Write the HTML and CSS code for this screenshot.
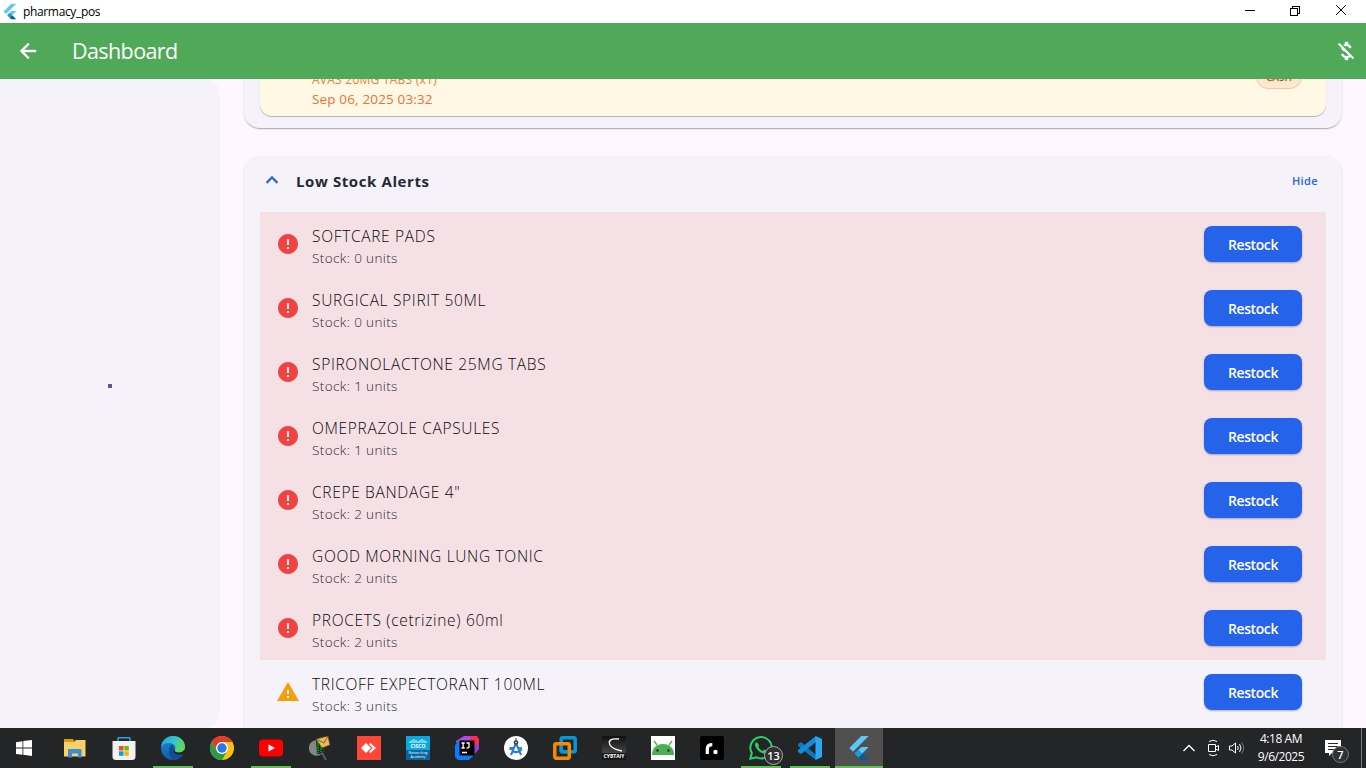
FILE: index.html
```html
<!DOCTYPE html>
<html lang="en">
<head>
<meta charset="utf-8">
<title>pharmacy_pos</title>
<link rel="stylesheet" href="styles.css">
</head>
<body>
<svg class="defs" aria-hidden="true">
  <symbol id="flutter" viewBox="0 0 24 24">
    <path fill="#5cc8f8" d="M14.3 0 2.3 12 6 15.7 21.7 0z"/>
    <path fill="#5cc8f8" d="M14.3 11.07 7.86 17.53 11.5 21.2 21.7 11.07z"/>
    <path fill="#075b9d" d="M11.5 21.2 14.3 24h7.4l-6.5-6.47z"/>
    <path fill="#1a9ce0" d="m7.86 17.53 3.7-3.7 3.7 3.7-3.7 3.7z"/>
  </symbol>
  <symbol id="error" viewBox="0 0 24 24"><path fill="#ef4444" d="M12 2C6.48 2 2 6.48 2 12s4.48 10 10 10 10-4.48 10-10S17.52 2 12 2z"/><path fill="#fbe4ea" d="M11 7h2v6h-2zM11 15h2v2h-2z"/></symbol>
  <symbol id="warning" viewBox="0 0 24 24"><path fill="#f59e0b" d="M1 21h22L12 2z"/><path fill="#f6f1fa" d="M11 10h2v4h-2zM11 16h2v2h-2z"/></symbol>
</svg>

<header class="titlebar">
  <svg class="title-logo" viewBox="0 0 24 24"><use href="#flutter"/></svg>
  <span class="title-text">pharmacy_pos</span>
  <svg class="window-buttons" viewBox="0 0 136 23" fill="none" stroke="#000" shape-rendering="crispEdges">
    <path d="M15 10.5h10M60.500 8.500h7v7h-7zM62.500 8v-2h7v7h-2"/>
    <path shape-rendering="auto" d="m106.200 5.200 9.600 9.600m0-9.600-9.600 9.600"/>
  </svg>
</header>

<div class="appbar">
  <svg class="back" viewBox="0 0 24 24"><path fill="#fff" stroke="#fff" stroke-width=".4" d="M20 11H7.830l5.590-5.590L12 4l-8 8 8 8 1.410-1.410L7.830 13H20z"/></svg>
  <h1>Dashboard</h1>
  <svg class="money" viewBox="0 0 24 24"><path fill="#fff" stroke="#fff" stroke-width=".4" d="M12.500 6.900c1.780 0 2.440.850 2.500 2.100h2.210c-.070-1.720-1.120-3.300-3.210-3.810V3h-3v2.160c-.530.120-1.030.300-1.480.540l1.470 1.470c.410-.170.910-.270 1.510-.270zM5.330 4.060 4.060 5.330 7.500 8.770c0 2.080 1.560 3.210 3.910 3.910l3.510 3.510c-.340.480-1.050.910-2.420.910-2.060 0-2.870-.920-2.980-2.100h-2.200c.120 2.190 1.760 3.420 3.680 3.830V21h3v-2.150c.960-.180 1.820-.550 2.450-1.120l2.220 2.220 1.270-1.270z"/></svg>
</div>

<div class="workspace">
  <aside class="sidebar"><span class="loader"></span></aside>
  <main class="content">
    <section class="card sales">
      <div class="sale">
        <div class="sale-text"><p class="sale-items">AVAS 20MG TABS (x1)</p><p class="sale-date">Sep 06, 2025 03:32</p></div>
        <span class="chip">CASH</span>
      </div>
    </section>
    <section class="card alerts">
      <div class="alerts-head">
        <svg class="chevron" viewBox="0 0 24 24"><path fill="#2563eb" stroke="#2563eb" stroke-width=".4" d="m12 8-6 6 1.410 1.410L12 10.830l4.590 4.580L18 14z"/></svg>
        <h2>Low Stock Alerts</h2>
        <span class="hide">Hide</span>
      </div>
      <div class="row critical"><svg class="status"><use href="#error"/></svg><div class="item"><p class="name">SOFTCARE PADS</p><p class="stock">Stock: 0 units</p></div><button>Restock</button></div>
      <div class="row critical"><svg class="status"><use href="#error"/></svg><div class="item"><p class="name">SURGICAL SPIRIT 50ML</p><p class="stock">Stock: 0 units</p></div><button>Restock</button></div>
      <div class="row critical"><svg class="status"><use href="#error"/></svg><div class="item"><p class="name">SPIRONOLACTONE 25MG TABS</p><p class="stock">Stock: 1 units</p></div><button>Restock</button></div>
      <div class="row critical"><svg class="status"><use href="#error"/></svg><div class="item"><p class="name">OMEPRAZOLE CAPSULES</p><p class="stock">Stock: 1 units</p></div><button>Restock</button></div>
      <div class="row critical"><svg class="status"><use href="#error"/></svg><div class="item"><p class="name">CREPE BANDAGE 4"</p><p class="stock">Stock: 2 units</p></div><button>Restock</button></div>
      <div class="row critical"><svg class="status"><use href="#error"/></svg><div class="item"><p class="name">GOOD MORNING LUNG TONIC</p><p class="stock">Stock: 2 units</p></div><button>Restock</button></div>
      <div class="row critical"><svg class="status"><use href="#error"/></svg><div class="item"><p class="name">PROCETS (cetrizine) 60ml</p><p class="stock">Stock: 2 units</p></div><button>Restock</button></div>
      <div class="row"><svg class="status"><use href="#warning"/></svg><div class="item"><p class="name">TRICOFF EXPECTORANT 100ML</p><p class="stock">Stock: 3 units</p></div><button>Restock</button></div>
    </section>
  </main>
</div>

<footer class="taskbar">
  <div class="task start"><svg viewBox="0 0 24 24"><path fill="#fff" d="m4 6.200 6.500-1v6.300H4zm7.300-1.100L20 4v7.500h-8.700zM4 12.400h6.500v6.400L4 17.900zm7.300 0H20V20l-8.700-1.200z"/></svg></div>
  <div class="task"><svg viewBox="0 0 24 24"><path fill="#d99a0b" d="M1 3h9l1.500 2L10 7H1z"/><path fill="#fbd167" d="M1 6h10l2-2h9.500v16.500H1z"/><path fill="#3a8ed8" d="M5 21.500V14q0-1 1-1h11.500q1 0 1 1v7.500H15v-4H9v4z"/></svg></div>
  <div class="task"><svg viewBox="0 0 24 24"><path fill="none" stroke="#20a8e8" stroke-width="1.500" d="M6 6V2.300q0-.500.500-.500h11q.500 0 .500.500V6"/><path fill="#f2f2f3" d="M.500 5h23v15.500q0 3.500-3.500 3.500H4q-3.500 0-3.500-3.500z"/><path fill="#f04e1f" d="M7 10h4.500v4.500H7z"/><path fill="#7cb800" d="M12.300 10h4.500v4.500h-4.500z"/><path fill="#00a1ec" d="M7 15.300h4.500v4.500H7z"/><path fill="#fbb500" d="M12.300 15.300h4.500v4.500h-4.500z"/></svg></div>
  <div class="task open"><svg viewBox="0 0 24 24">
    <defs><linearGradient id="edge-top" x1="0" y1="0" x2="1" y2=".4"><stop offset="0" stop-color="#239fe0"/><stop offset=".6" stop-color="#32c8cc"/><stop offset="1" stop-color="#61d852"/></linearGradient><linearGradient id="edge-low" x1="0" y1="0" x2="0" y2="1"><stop stop-color="#1b88dd"/><stop offset="1" stop-color="#1061ab"/></linearGradient></defs>
    <circle cx="12" cy="12" r="12" fill="url(#edge-low)"/><path fill="#124e91" d="M8 14c0-3 1.500-5 4-6l1 5c-1 2 1 5 5 5.500 2 .2 4-1 4.800-1C20 23 15 24.500 12 23.800 9 22 8 18 8 14z"/><path fill="url(#edge-top)" d="M0 11C1 4 6 0 12 0c7 0 12 5 12 10.500 0 4-3 6-6 6-3 0-4.500-1-4.500-2 0-.7 1-1 1-2.500C14.500 9 11 7 7.500 7 4 7 1 9 0 11z"/><path fill="#242526" d="M14.200 13.300c-1.500 1.500.2 3.300 3.800 3.300 2.600 0 4.500-1.300 5.700-3.300l.3 3-1.500 2C16 20 11.500 17 12.500 14z"/></svg></div>
  <div class="task"><svg viewBox="0 0 24 24"><circle cx="12" cy="12" r="12" fill="#fbc116"/><path fill="#e33b2e" d="M1.600 6A12 12 0 0 1 22.400 6H12L6.800 15z"/><path fill="#269b48" d="M1.600 6 6.800 15 12 18l5.200-3L12 24A12 12 0 0 1 1.600 6z"/><circle cx="12" cy="12" r="6" fill="#fff"/><circle cx="12" cy="12" r="4.700" fill="#2878e8"/></svg></div>
  <div class="task open"><svg viewBox="0 0 24 24"><rect y="3.500" width="24" height="17" rx="4" fill="#f00"/><path fill="#fff" d="m9.500 8.500 6.500 3.500-6.500 3.500z"/></svg></div>
  <div class="task"><svg viewBox="0 0 24 24"><path stroke="#555b61" stroke-width="2" d="m14 17 4 7"/><circle cx="8.500" cy="12" r="7.700" fill="#858786"/><path fill="#0a3c12" d="M8 5c5 0 8 3 8 7s-2 6-7 6z"/><path fill="#e9b957" stroke="#564019" stroke-width=".7" d="m8 3 12-3 2 9-8 3z"/><path fill="none" stroke="#68481d" stroke-width=".8" d="m8 3 8 4 4-7"/><path stroke="#1fcf42" stroke-dasharray="1.500 1" d="M10 6v11m3-7v6"/></svg></div>
  <div class="task"><svg viewBox="0 0 24 24"><path fill="#ff4438" d="M0 0h24v24H0z"/><path fill="#fff" d="m4 12 5-5 5 5-5 5zM12 8.300 13.500 7l5.500 5-5.500 5-1.500-1.300 3.700-3.700z"/></svg></div>
  <div class="task"><svg viewBox="0 0 24 24"><path fill="#08a9dc" d="M0 0h24v14H0z"/><path fill="#0565a2" d="M0 14h24v10H0z"/><path stroke="#fff" stroke-width=".9" d="M4 5v2m2-3v3m2-4v4m2-3v3m2-2v2m2-3v3m2-4v4m2-3v3m2-2v2"/><text x="12" y="12" class="cisco">CISCO</text><text x="12" y="18" class="academy">Networking</text><text x="12" y="22" class="academy">Academy</text></svg></div>
  <div class="task"><svg viewBox="0 0 24 24"><path fill="#a94be8" d="m1 5 8-5h9L6 21z"/><path fill="#fe2857" d="M15 0h7l2 3v8l-8 9z"/><path fill="#087cfa" d="m0 9 5-5v15h14l-5 5H3l-3-3z"/><path fill="#8d43db" d="m19 10 5-2v5l-6 7z"/><path fill="#000" d="M4.500 4.500h15v15h-15z"/><path fill="none" stroke="#fff" stroke-width="1.300" d="M6.500 7h3.300M8.100 7v5M6.500 12h3.300M11.500 7H14v4q0 1-2.500 1M7 16.500h5"/></svg></div>
  <div class="task"><svg viewBox="0 0 24 24"><circle cx="12" cy="12" r="12" fill="#fff"/><path fill="none" stroke="#2879ee" stroke-width="2" d="M7 19 12 7l5 12M8 15q6 3 10-2"/><path fill="#2879ee" d="M5.500 11h4l-1 3h-3z"/><circle cx="12" cy="6.500" r="2.300" fill="#333b47"/><circle cx="12" cy="6.500" r=".8" fill="#fff"/><path stroke="#333b47" d="M12 2v3"/><path fill="#20b364" d="M15 11h3v3h-3z"/></svg></div>
  <div class="task"><svg viewBox="0 0 24 24" fill="none" stroke-width="3.500"><rect x="8.200" y="1.800" width="14" height="14" rx="1.500" stroke="#0797d5"/><rect x="1.800" y="7.800" width="14.500" height="14.500" rx="1.500" stroke="#f38b00"/><path stroke="#0797d5" d="M8.200 10v4.500q0 1.300 1.300 1.300h4.500"/></svg></div>
  <div class="task"><svg viewBox="0 0 24 24"><defs><linearGradient id="cyb" x2="0" y2="1"><stop stop-color="#111"/><stop offset=".7" stop-color="#444"/><stop offset=".72" stop-color="#171717"/></linearGradient></defs><path fill="url(#cyb)" d="M0 0h24v24H0z"/><path fill="none" stroke="#fff" stroke-width="1.300" d="M17 3C8 2 6 5 8 9q2 4 12 6"/><text x="12" y="22" class="cyber">CYBTAIY</text></svg></div>
  <div class="task"><svg viewBox="0 0 24 24"><path fill="#fff" d="M0 0h24v24H0z"/><path stroke="#4caf55" stroke-width="1.300" d="m6 9-3-4m15 4 3-4"/><path fill="#4caf55" d="M1 19C1 12 5 8 12 8s11 4 11 11z"/><circle cx="6.500" cy="14.500" r="1.200" fill="#14351c"/><circle cx="17.500" cy="14.500" r="1.200" fill="#14351c"/></svg></div>
  <div class="task"><svg viewBox="0 0 24 24"><rect width="24" height="24" rx="2" fill="#000"/><path fill="none" stroke="#fff" stroke-width="3.200" d="M7.300 18v-5q0-4.300 5-4.300"/><circle cx="15.500" cy="16" r="2.200" fill="#fff"/></svg></div>
  <div class="task open"><svg viewBox="0 0 24 24" fill="none"><path stroke="#25d366" stroke-width="2" d="m1.300 22.700 1.500-5.600A10.700 10.700 0 1 1 7 21.200z"/><path fill="#25d366" d="M8 6.300c-1-.3-2 1.200-2 2.500 0 3 5 8.700 9 8.700 2 0 3-1.500 2.800-2.600l-2.800-1.400-1.300 1.500c-2.200-1-3.500-2.200-4.500-4.200l1-1.300z"/></svg><span class="badge">13</span></div>
  <div class="task open"><svg viewBox="0 0 24 24"><path fill="#0879c4" d="m0 8 3-2 15 13v5L0 10z"/><path fill="#168dd9" d="m0 16 3 2L18 6V0L0 14z"/><path fill="#2ca6f1" d="m17.500 0 6.500 3v18l-6.500 3z"/></svg></div>
  <div class="task open active"><svg viewBox="0 0 24 24"><use href="#flutter"/></svg></div>
  <div class="tray">
    <svg class="tray-icons" viewBox="0 0 66 24" fill="none" stroke="#fff">
      <path stroke-width="1.300" d="m1.500 15 5.500-5.500 5.500 5.500"/>
      <path d="M26.500 8.500h7v7h-7zM33.500 11l3-1.500v5l-3-1.500zM27 5.500q4-2.500 8 0M27 18.500q4 2.500 8 0"/>
      <path d="M47.500 10h2.500l3.500-3v10L50 14h-2.500zM55.500 10q1.500 2 0 4m2-6q3 4 0 8"/><path stroke="#777" d="M59.500 6.500q4.500 5.500 0 11"/>
    </svg>
    <div class="clock"><span>4:18 AM</span><span>9/6/2025</span></div>
    <div class="notice"><svg viewBox="0 0 24 24"><path fill="#fff" d="M1 4h16v13H8l-3 3v-3H1z"/><path stroke="#292929" d="M4 7.500h10m-10 3h10m-10 3h7"/></svg><span class="badge">7</span></div>
    <span class="desktop-edge"></span>
  </div>
</footer>
</body>
</html>
```
FILE: styles.css
```css
* { box-sizing: border-box; }
html, body { margin: 0; width: 1366px; height: 768px; overflow: hidden; }
body { display: flex; flex-direction: column; font-family: "Open Sans", "Noto Sans", sans-serif; background: #fef7ff; }
p, h1, h2 { margin: 0; }
svg { display: block; flex: none; }
.defs { width: 0; height: 0; position: absolute; }

.titlebar { height: 23px; flex: none; display: flex; align-items: center; background: #fff; padding-left: 2px; }
.title-logo { width: 16px; height: 17px; }
.title-text { margin-left: 5px; padding-top: 1px; font-size: 12px; line-height: 20px; letter-spacing: -.35px; color: #000; }
.window-buttons { width: 136px; height: 23px; margin-left: auto; }

.appbar { height: 56px; flex: none; display: flex; align-items: center; background: #4fa958; padding: 0 8px 0 16px; }
.back { width: 24px; height: 24px; }
.appbar h1 { margin-left: 32px; color: #fff; font-size: 21.5px; font-weight: 400; letter-spacing: -.6px; line-height: 30px; }
.money { width: 24px; height: 24px; margin-left: auto; }

.workspace { height: 649px; flex: none; display: flex; overflow: hidden; }
.sidebar { width: 220px; height: 649px; display: grid; place-items: center; background: #f6f2f9; border-radius: 0 16px 16px 0; }
.loader { width: 4px; height: 4px; background: #6750a4; margin-bottom: 36px; }
.content { flex: 1; padding: 0 24px; }
.card { background: #f6f2f9; box-shadow: 0 1px 2px rgba(0,0,0,.18), 0 2px 1px -1px rgba(0,0,0,.18); }
.sales { height: 49px; border-radius: 0 0 16px 16px; padding: 0 16px 12px; }
.sale { height: 37px; display: flex; align-items: flex-end; background: #fff8e4; border-radius: 0 0 12px 12px; padding: 0 24px 7px 52px; box-shadow: 0 1px 1px rgba(0,0,0,.26); clip-path: inset(0 -3px -3px); }
.sale-text { flex: 1; }
.sale-items { color: #f07c3f; font-size: 12px; line-height: 18px; letter-spacing: .25px; }
.sale-date { color: #ed7134; font-size: 13.5px; line-height: 20px; letter-spacing: .15px; }
.chip { width: 46px; height: 24px; display: grid; place-items: center; margin-bottom: 20px; border: 1px solid #f7c5a5; border-radius: 12px; background: #fde7d0; color: #c94c0b; font-size: 10px; font-weight: 600; line-height: 14px; }

.alerts { height: 640px; margin-top: 28px; border-radius: 16px; padding: 0 16px; }
.alerts-head { height: 56px; display: flex; align-items: center; padding: 0 8px 6px 0; }
.chevron { width: 24px; height: 24px; margin-bottom: 2px; }
.alerts-head h2 { margin-left: 12px; flex: 1; color: #1f2937; font-size: 15px; font-weight: 700; letter-spacing: .6px; line-height: 24px; }
.hide { color: #2563eb; font-size: 11px; font-weight: 600; letter-spacing: .4px; margin-bottom: 1px; }
.row { height: 64px; display: flex; align-items: center; padding: 0 24px 0 16px; }
.critical { background: #f5e0e6; }
.status { width: 24px; height: 24px; }
.item { flex: 1; margin-left: 12px; padding-top: 3px; }
.name { color: #09080b; font-size: 15.5px; font-weight: 350; letter-spacing: .68px; line-height: 24px; }
.stock { color: #2f2c34; font-size: 13.5px; font-weight: 350; letter-spacing: .38px; line-height: 20px; }
button { width: 98px; height: 36px; padding: 2px 0 0; border: 0; border-radius: 8px; background: #2563eb; color: #fff; font: 600 14px/20px "Open Sans", "Noto Sans", sans-serif; letter-spacing: -.4px; box-shadow: 0 1px 2px rgba(0,0,0,.28); }

.taskbar { height: 40px; flex: none; display: flex; background: #242526; color: #fff; }
.task { width: 48px; height: 40px; margin-right: 1px; flex: none; display: grid; place-items: center; position: relative; }
.task svg { width: 24px; height: 24px; }
.start { margin-right: 3px; }
.open::after { content: ""; position: absolute; bottom: 0; left: 4px; right: 4px; height: 2px; background: #61bd5b; }
.active { background: #505050; }
.active::after { left: 0; right: 0; }
.badge { position: absolute; left: 27px; top: 18px; width: 19px; height: 19px; display: grid; place-items: center; background: #303234; border: 1px solid #aaa; border-radius: 50%; font-size: 11px; font-weight: 600; line-height: 16px; }
.cisco, .academy, .cyber { fill: #fff; font-family: "Open Sans", sans-serif; font-weight: 700; text-anchor: middle; }
.cisco { font-size: 5px; }
.academy { font-size: 3.5px; font-weight: 400; }
.cyber { font-size: 5px; }
.tray { margin-left: auto; display: flex; align-items: center; padding-right: 4px; }
.tray-icons { width: 66px; height: 24px; }
.clock { width: 62px; margin-left: 2px; display: flex; flex-direction: column; align-items: center; font-size: 12px; line-height: 18px; letter-spacing: -.45px; }
.notice { position: relative; width: 24px; height: 24px; margin-left: 12px; }
.notice .badge { left: 8px; top: 10px; width: 17px; height: 17px; border-color: #777; }
.desktop-edge { width: 1px; height: 40px; background: #777; margin-left: 13px; }
```
